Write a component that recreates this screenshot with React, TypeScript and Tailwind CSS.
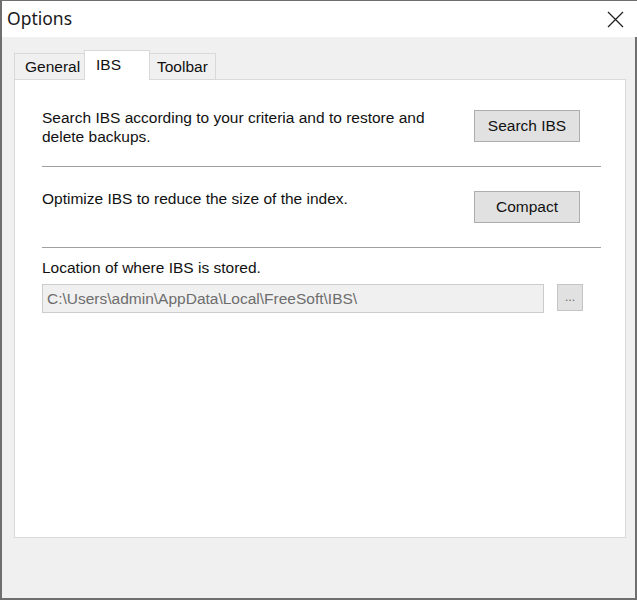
import React from "react";

export default function App() {
  const font = { fontFamily: '"Liberation Sans", Arial, sans-serif' };
  return (
    <div className="w-[637px] h-[600px] bg-[#f0f0f0] flex flex-col border-l-2 border-t border-b-2 border-[#6f6f6f] overflow-hidden" style={font}>
      {/* Title bar */}
      <div className="h-[36px] bg-white flex items-center justify-between pl-[5px] pr-[14px] shrink-0">
        <span className="text-[17.5px] text-[#1a1a1a] font-['Noto_Sans',sans-serif] leading-none">Options</span>
        <svg width="17" height="17" viewBox="0 0 17 17" className="mt-[1px] -mr-[1px]">
          <path d="M1 1 L16 16 M16 1 L1 16" stroke="#222" strokeWidth="1.3" fill="none" />
        </svg>
      </div>
      <div className="flex-1 flex flex-col pl-[12px] pr-[9px] pt-[13px] border-r-2 border-[#6f6f6f]">
        {/* Tabs */}
        <div className="flex items-end h-[29px] relative z-10">
          <div className="h-[26px] w-[71px] border border-b-0 border-[#d9d9d9] bg-[#f0f0f0] flex items-center pl-[10px] text-[15.5px] text-[#111] pt-[1px]">General</div>
          <div className="h-[30px] w-[66px] border border-b-0 border-[#d9d9d9] bg-white flex items-start pt-[2px] pl-[11px] text-[15.5px] text-[#111] -mb-[1px] -ml-[1px]">IBS</div>
          <div className="h-[26px] w-[66px] border border-b-0 border-l-0 border-[#d9d9d9] bg-[#f0f0f0] flex items-center pl-[7px] text-[15.5px] text-[#111] pt-[1px]">Toolbar</div>
        </div>
        {/* Panel */}
        <div className="h-[459px] bg-white border border-[#d9d9d9] pl-[27px] pr-[24px] pt-[28px] text-[15.5px] text-[#111]">
          <div className="flex justify-between h-[38px]">
            <p className="leading-[19px] w-[400px]">Search IBS according to your criteria and to restore and delete backups.</p>
            <button className="w-[106px] h-[32px] bg-[#e1e1e1] border border-[#adadad] text-[15.5px] text-[#111] mr-[21px] mt-[2px]">Search IBS</button>
          </div>
          <div className="h-px bg-[#a0a0a0] mt-[20px]" />
          <div className="flex justify-between h-[34px] mt-[22px]">
            <p className="leading-[19px]">Optimize IBS to reduce the size of the index.</p>
            <button className="w-[106px] h-[32px] bg-[#e1e1e1] border border-[#adadad] text-[15.5px] text-[#111] mr-[21px] mt-[2px]">Compact</button>
          </div>
          <div className="h-px bg-[#a0a0a0] mt-[24px]" />
          <p className="leading-[19px] mt-[10px]">Location of where IBS is stored.</p>
          <div className="flex items-start mt-[7px]">
            <div className="w-[502px] h-[29px] bg-[#f0f0f0] border border-[#cccccc] flex items-center pl-[4px] text-[#6d6d6d]">C:\Users\admin\AppData\Local\FreeSoft\IBS\</div>
            <button className="ml-[13px] w-[26px] h-[27px] bg-[#e1e1e1] border border-[#c4c4c4] text-[#666] text-[12px] leading-none pb-[2px]">...</button>
          </div>
        </div>
        <div className="flex-1" />
      </div>
    </div>
  );
}
